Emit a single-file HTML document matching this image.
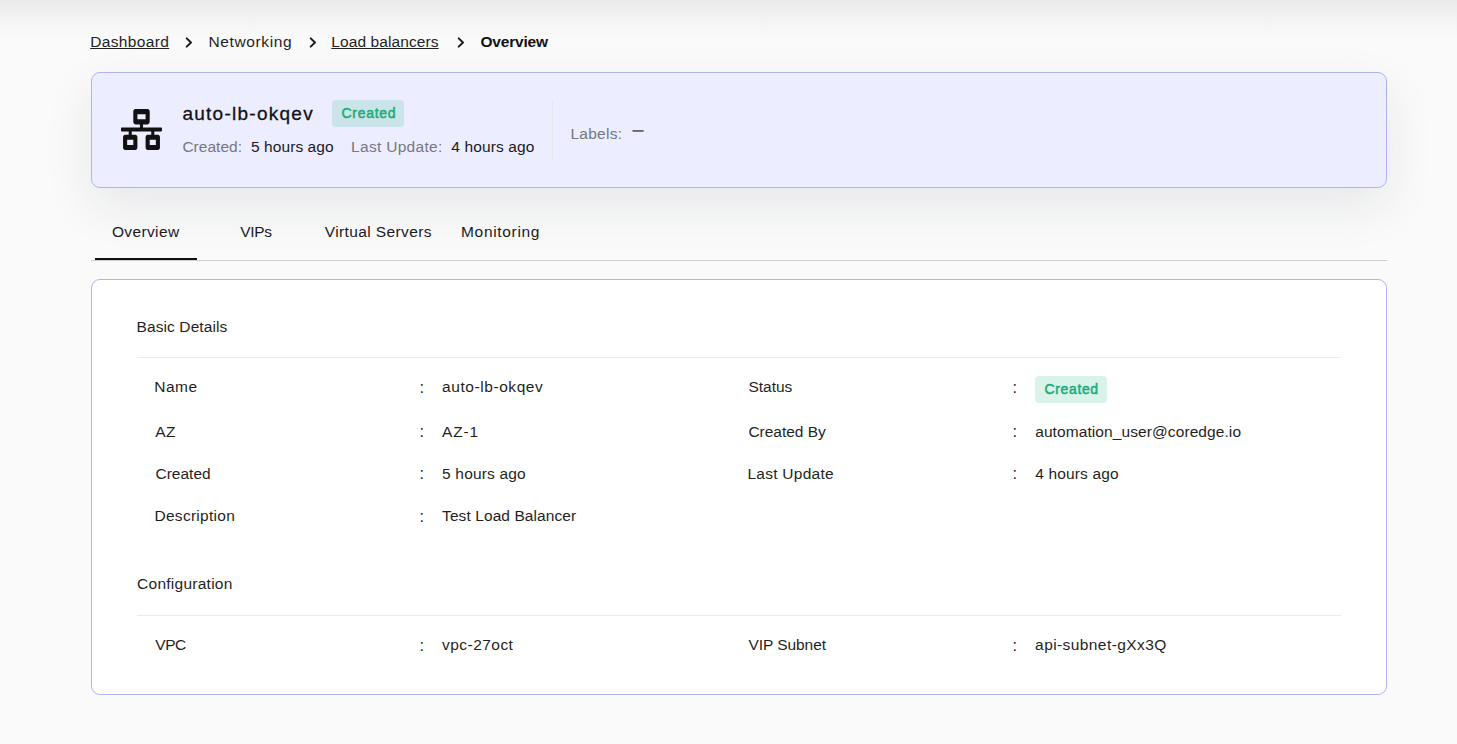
<!DOCTYPE html>
<html lang="en">
<head>
<meta charset="utf-8">
<title>Load balancer overview</title>
<style>
*{box-sizing:border-box}
html,body{margin:0;padding:0}
body{width:1457px;height:744px;overflow:hidden;position:relative;background:#fafafa;font-family:"Liberation Sans", Arial, sans-serif;color:#1f1f24}
.a,.t{position:absolute}
.t{line-height:1;white-space:nowrap;margin:0;font-weight:400}
a.t{text-decoration:underline}
.topshade{left:0;top:0;width:1457px;height:42px;background:linear-gradient(to bottom,#eaeaea 0,#eeeeee 8px,#f2f2f2 16px,#f5f5f5 24px,#f8f8f8 32px,#fafafa 42px)}
.hdr{left:91px;top:72px;width:1296px;height:116px;background:#ecedfe;border:1px solid #b0b4ee;border-radius:9px;box-shadow:0 18px 50px rgba(25,35,55,.085)}
.badge{border-radius:4px}
.b1{left:332px;top:100px;width:72px;height:27px;background:#cbe4e9}
.b2{left:1035px;top:376px;width:72px;height:27px;background:#d9f3ea}
.vdiv{left:552px;top:100px;width:1px;height:60px;background:#e7e7ee}
.tabline{left:91px;top:260px;width:1296px;height:1px;background:#cecece}
.tabact{left:95px;top:258px;width:102px;height:2px;background:#111114}
.card{left:91px;top:279px;width:1296px;height:416px;background:#fff;border:1px solid #b0b4ee;border-radius:9px}
.hr{left:137px;width:1204px;height:1px;background:#ebebeb}
</style>
</head>
<body>
<div class="a topshade"></div>
<nav aria-label="breadcrumb">
<a class="t" style="left:90.20px;top:33.90px;font-size:15.5px;letter-spacing:0.349px;color:#1f1f24;text-decoration:underline;text-underline-offset:1px;text-decoration-thickness:1px;">Dashboard</a>
<svg class="a" style="left:184.3px;top:35.9px" width="10" height="13" viewBox="0 0 10 13"><path d="M2.7 2.4 L7 6.5 L2.7 10.6" fill="none" stroke="#1a1a1f" stroke-width="2" stroke-linecap="round" stroke-linejoin="round"/></svg>
<span class="t" style="left:208.50px;top:33.90px;font-size:15.5px;letter-spacing:0.621px;color:#1f1f24;">Networking</span>
<svg class="a" style="left:308.4px;top:35.9px" width="10" height="13" viewBox="0 0 10 13"><path d="M2.7 2.4 L7 6.5 L2.7 10.6" fill="none" stroke="#1a1a1f" stroke-width="2" stroke-linecap="round" stroke-linejoin="round"/></svg>
<a class="t" style="left:331.30px;top:33.90px;font-size:15.5px;letter-spacing:0.097px;color:#1f1f24;text-decoration:underline;text-underline-offset:1px;text-decoration-thickness:1px;">Load balancers</a>
<svg class="a" style="left:455.5px;top:35.9px" width="10" height="13" viewBox="0 0 10 13"><path d="M2.7 2.4 L7 6.5 L2.7 10.6" fill="none" stroke="#1a1a1f" stroke-width="2" stroke-linecap="round" stroke-linejoin="round"/></svg>
<span class="t" style="left:480.40px;top:33.90px;font-size:15.5px;letter-spacing:-0.182px;color:#111114;font-weight:700;">Overview</span>
</nav>
<header>
<div class="a hdr"></div>
<svg class="a" style="left:121px;top:109px" width="41" height="41" viewBox="0 0 640 512" preserveAspectRatio="none"><path fill="#111114" d="M640 264v-16c0-8.84-7.16-16-16-16H344v-40h72c17.67 0 32-14.33 32-32V32c0-17.67-14.33-32-32-32H224c-17.67 0-32 14.33-32 32v128c0 17.67 14.33 32 32 32h72v40H16c-8.84 0-16 7.16-16 16v16c0 8.84 7.16 16 16 16h104v40H64c-17.67 0-32 14.33-32 32v128c0 17.67 14.33 32 32 32h160c17.67 0 32-14.33 32-32V352c0-17.67-14.33-32-32-32h-56v-40h304v40h-56c-17.67 0-32 14.33-32 32v128c0 17.67 14.33 32 32 32h160c17.67 0 32-14.33 32-32V352c0-17.67-14.33-32-32-32h-56v-40h104c8.84 0 16-7.16 16-16zM256 128V64h128v64H256zm-64 320H96v-64h96v64zm352 0h-96v-64h96v64z"/></svg>
<h1 class="t" style="left:182.40px;top:104.00px;font-size:19.0px;letter-spacing:1.265px;color:#111114;-webkit-text-stroke:0.3px #111114;">auto-lb-okqev</h1>
<div class="a badge b1"></div>
<span class="t" style="left:341.50px;top:105.80px;font-size:14.0px;letter-spacing:0.697px;color:#1bae79;-webkit-text-stroke:0.55px #1bae79;">Created</span>
<span class="t" style="left:182.40px;top:138.80px;font-size:15.5px;letter-spacing:0.022px;color:#77777f;">Created:</span>
<span class="t" style="left:251.00px;top:138.80px;font-size:15.5px;letter-spacing:0.075px;color:#1a1a1f;">5 hours ago</span>
<span class="t" style="left:351.10px;top:138.80px;font-size:15.5px;letter-spacing:0.301px;color:#77777f;">Last Update:</span>
<span class="t" style="left:451.30px;top:138.80px;font-size:15.5px;letter-spacing:0.115px;color:#1a1a1f;">4 hours ago</span>
<div class="a vdiv"></div>
<span class="t" style="left:570.40px;top:126.00px;font-size:15.5px;letter-spacing:0.271px;color:#77777f;">Labels:</span>
<span class="t" style="left:632.50px;top:124.10px;font-size:11.0px;letter-spacing:0.000px;color:#5e5e68;-webkit-text-stroke:0.25px #5e5e68;text-shadow:0 1px 0 #5e5e68;">—</span>
</header>
<div role="tablist">
<div class="a tabline"></div><div class="a tabact"></div>
<span class="t" style="left:111.90px;top:223.90px;font-size:15.5px;letter-spacing:0.371px;color:#1a1a1f;">Overview</span>
<span class="t" style="left:240.30px;top:223.90px;font-size:15.5px;letter-spacing:-0.361px;color:#1a1a1f;">VIPs</span>
<span class="t" style="left:324.70px;top:223.90px;font-size:15.5px;letter-spacing:0.385px;color:#1a1a1f;">Virtual Servers</span>
<span class="t" style="left:461.00px;top:223.90px;font-size:15.5px;letter-spacing:0.672px;color:#1a1a1f;">Monitoring</span>
</div>
<main>
<div class="a card"></div>
<h2 class="t" style="left:136.50px;top:319.30px;font-size:15.5px;letter-spacing:0.105px;color:#1f1f24;">Basic Details</h2>
<div class="a hr" style="top:357px"></div>
<span class="t" style="left:154.30px;top:378.80px;font-size:15.5px;letter-spacing:0.458px;color:#1f1f24;">Name</span>
<span class="t" style="left:442.10px;top:378.80px;font-size:15.5px;letter-spacing:0.561px;color:#1f1f24;">auto-lb-okqev</span>
<span class="t" style="left:748.40px;top:378.80px;font-size:15.5px;letter-spacing:0.002px;color:#1f1f24;">Status</span>
<div class="a badge b2"></div>
<span class="t" style="left:1044.60px;top:381.90px;font-size:14.0px;letter-spacing:0.613px;color:#1bae79;-webkit-text-stroke:0.55px #1bae79;">Created</span>
<span class="t" style="left:155.30px;top:423.70px;font-size:15.5px;letter-spacing:0.462px;color:#1f1f24;">AZ</span>
<span class="t" style="left:442.10px;top:423.70px;font-size:15.5px;letter-spacing:0.811px;color:#1f1f24;">AZ-1</span>
<span class="t" style="left:748.40px;top:423.70px;font-size:15.5px;letter-spacing:-0.021px;color:#1f1f24;">Created By</span>
<span class="t" style="left:1035.20px;top:423.70px;font-size:15.5px;letter-spacing:0.090px;color:#1f1f24;">automation_user@coredge.io</span>
<span class="t" style="left:155.50px;top:465.70px;font-size:15.5px;letter-spacing:-0.004px;color:#1f1f24;">Created</span>
<span class="t" style="left:442.10px;top:465.70px;font-size:15.5px;letter-spacing:0.165px;color:#1f1f24;">5 hours ago</span>
<span class="t" style="left:747.40px;top:465.70px;font-size:15.5px;letter-spacing:0.264px;color:#1f1f24;">Last Update</span>
<span class="t" style="left:1035.20px;top:465.70px;font-size:15.5px;letter-spacing:0.155px;color:#1f1f24;">4 hours ago</span>
<span class="t" style="left:154.50px;top:508.00px;font-size:15.5px;letter-spacing:0.279px;color:#1f1f24;">Description</span>
<span class="t" style="left:442.10px;top:508.00px;font-size:15.5px;letter-spacing:0.080px;color:#1f1f24;">Test Load Balancer</span>
<h2 class="t" style="left:137.10px;top:576.10px;font-size:15.5px;letter-spacing:0.252px;color:#1f1f24;">Configuration</h2>
<div class="a hr" style="top:615px"></div>
<span class="t" style="left:155.30px;top:637.20px;font-size:15.5px;letter-spacing:-0.438px;color:#1f1f24;">VPC</span>
<span class="t" style="left:442.10px;top:637.20px;font-size:15.5px;letter-spacing:0.451px;color:#1f1f24;">vpc-27oct</span>
<span class="t" style="left:748.40px;top:637.20px;font-size:15.5px;letter-spacing:-0.057px;color:#1f1f24;">VIP Subnet</span>
<span class="t" style="left:1035.10px;top:637.20px;font-size:15.5px;letter-spacing:0.415px;color:#1f1f24;">api-subnet-gXx3Q</span>
<span class="t" style="left:419.60px;top:378.50px;font-size:16.5px;letter-spacing:0.000px;color:#1f1f24;">:</span>
<span class="t" style="left:419.60px;top:423.40px;font-size:16.5px;letter-spacing:0.000px;color:#1f1f24;">:</span>
<span class="t" style="left:419.60px;top:465.40px;font-size:16.5px;letter-spacing:0.000px;color:#1f1f24;">:</span>
<span class="t" style="left:419.60px;top:507.70px;font-size:16.5px;letter-spacing:0.000px;color:#1f1f24;">:</span>
<span class="t" style="left:1012.60px;top:378.50px;font-size:16.5px;letter-spacing:0.000px;color:#1f1f24;">:</span>
<span class="t" style="left:1012.60px;top:423.40px;font-size:16.5px;letter-spacing:0.000px;color:#1f1f24;">:</span>
<span class="t" style="left:1012.60px;top:465.40px;font-size:16.5px;letter-spacing:0.000px;color:#1f1f24;">:</span>
<span class="t" style="left:419.60px;top:636.90px;font-size:16.5px;letter-spacing:0.000px;color:#1f1f24;">:</span>
<span class="t" style="left:1012.60px;top:636.90px;font-size:16.5px;letter-spacing:0.000px;color:#1f1f24;">:</span>
</main>
</body>
</html>
